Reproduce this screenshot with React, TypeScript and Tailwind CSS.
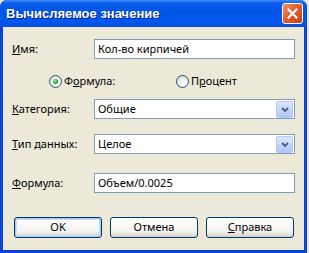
import React from "react";

const font = { fontFamily: '"Noto Sans", "Liberation Sans", Arial, sans-serif' };

function Label({ pre, u, post }: { pre?: string; u: string; post: string }) {
  return (
    <span>
      {pre}
      <span className="underline underline-offset-[1px]">{u}</span>
      {post}
    </span>
  );
}

function Radio({ checked }: { checked: boolean }) {
  return (
    <span className="flex h-[13px] w-[13px] shrink-0 items-center justify-center rounded-full border border-[#1C5180] bg-[radial-gradient(circle_at_65%_65%,#FFFFFF_0%,#E6E6E0_60%,#D2D2CA_100%)]">
      {checked && (
        <span className="h-[5px] w-[5px] rounded-full bg-[radial-gradient(circle_at_35%_35%,#9FE89F_0%,#2DAA2D_55%,#177A17_100%)]" />
      )}
    </span>
  );
}

function TextBox({ value }: { value: string }) {
  return (
    <div className="flex h-[20px] w-[201px] items-center border border-[#7F9DB9] bg-white pl-[3px]">
      {value}
    </div>
  );
}

function Combo({ value }: { value: string }) {
  return (
    <div className="flex h-[20px] w-[201px] items-center border border-[#7F9DB9] bg-white pl-[3px] pr-px">
      <span className="flex-1">{value}</span>
      <span className="flex h-[17px] w-[17px] items-center justify-center rounded-[2px] border border-[#B5C8F5] bg-[linear-gradient(to_bottom,#DCE7FE,#C1D3FB_60%,#B0C6F7)]">
        <svg width="8" height="5" viewBox="0 0 8 5">
          <path d="M1 1 L4 4 L7 1" fill="none" stroke="#4D6185" strokeWidth="2" />
        </svg>
      </span>
    </div>
  );
}

function Button({ children, primary }: { children: React.ReactNode; primary?: boolean }) {
  return (
    <div
      className={
        "flex h-[21px] w-[88px] items-center justify-center rounded-[3px] border border-[#003C74] bg-[linear-gradient(to_bottom,#FFFFFF,#F4F3EE_70%,#D6D0C5)] " +
        (primary ? "shadow-[inset_0_0_0_1px_#A9C4F2,inset_0_0_0_2px_#CEDCF7]" : "")
      }
    >
      {children}
    </div>
  );
}

export default function App() {
  return (
    <div className="h-[253px] w-[309px] bg-[#ECE9D8] text-[11px] text-black" style={font}>
      <div className="flex h-[253px] w-[307px] flex-col rounded-t-[7px] bg-[#0842D6]">
        <div className="flex h-[27px] shrink-0 items-center rounded-t-[7px] bg-[linear-gradient(to_bottom,#3C8CF8_0%,#0A5EEA_12%,#0055E6_45%,#0058EE_80%,#0A4CD8_100%)] pl-[6px] pr-[4px]">
          <span
            className="flex-1 text-[13px] font-bold text-white [text-shadow:1px_1px_0_#0A1E8C]"
            style={{ fontFamily: '"Liberation Sans", Arial, sans-serif' }}
          >
            Вычисляемое значение
          </span>
          <span className="flex h-[21px] w-[21px] items-center justify-center rounded-[3px] border border-white bg-[linear-gradient(135deg,#F0906A,#E25A2E_50%,#C8401C)]">
            <svg width="11" height="11" viewBox="0 0 11 11">
              <path d="M1.5 1.5 L9.5 9.5 M9.5 1.5 L1.5 9.5" stroke="white" strokeWidth="2.2" strokeLinecap="square" />
            </svg>
          </span>
        </div>
        <div className="mx-[3px] mb-[3px] flex flex-1 flex-col bg-[#ECE9D8] pl-[9px] pt-[12px]">
          <div className="flex items-center">
            <span className="w-[82px]"><Label u="И" post="мя:" /></span>
            <TextBox value="Кол-во кирпичей" />
          </div>
          <div className="mt-[16px] flex h-[13px] items-center">
            <span className="ml-[37px] flex w-[127px] items-center gap-[2px]">
              <Radio checked />
              <Label pre="Ф" u="о" post="рмула:" />
            </span>
            <span className="flex items-center gap-[2px]">
              <Radio checked={false} />
              <Label pre="П" u="р" post="оцент" />
            </span>
          </div>
          <div className="mt-[11px] flex items-center">
            <span className="w-[82px]"><Label u="К" post="атегория:" /></span>
            <Combo value="Общие" />
          </div>
          <div className="mt-[15px] flex items-center">
            <span className="w-[82px]"><Label u="Т" post="ип данных:" /></span>
            <Combo value="Целое" />
          </div>
          <div className="mt-[19px] flex items-center">
            <span className="w-[82px]"><Label u="Ф" post="ормула:" /></span>
            <TextBox value="Объем/0.0025" />
          </div>
          <div className="ml-[2px] mt-[24px] flex gap-[8px]">
            <Button primary>OK</Button>
            <Button>Отмена</Button>
            <Button><Label u="С" post="правка" /></Button>
          </div>
        </div>
      </div>
    </div>
  );
}
